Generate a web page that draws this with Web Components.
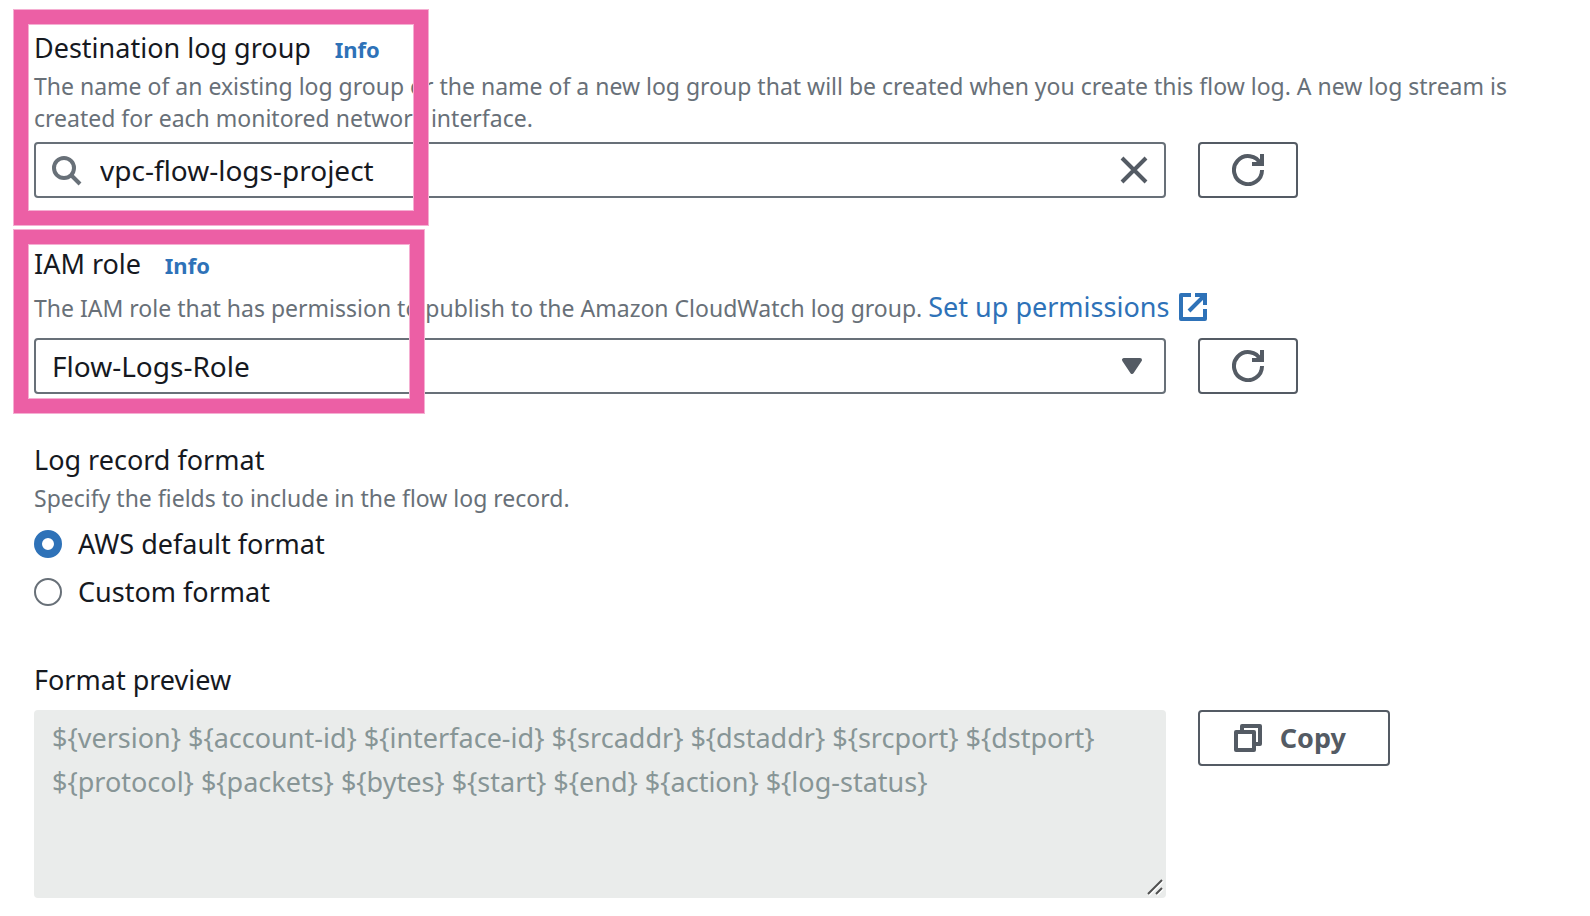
<!DOCTYPE html>
<html lang="en">
<head>
<meta charset="utf-8">
<title>Create flow log</title>
<style>
  html, body { margin: 0; background: #fff; }
  body {
    --ink: #16191f;
    --muted: #687078;
    --link: #2e72b8;
    --button: #545b64;
    --disabled-bg: #eaeceb;
    --disabled-ink: #879596;
    --marker: #ec5fa5;
    --marker-edge: #f5afd2;
    font-family: "Noto Sans", "Open Sans", sans-serif;
    font-size: 27px;
    line-height: 36px;
    color: var(--ink);
  }
</style>
</head>
<body>
<flow-log-form></flow-log-form>

<script>
const ICONS = {
  search: '<circle cx="7" cy="7" r="5"/><path d="m15 15-4.5-4.5"/>',
  close: '<path d="m2 2 12 12M14 2 2 14"/>',
  refresh: '<path d="M10 5h5V0M15 8a7 7 0 1 1-.7-3"/>',
  caret: '<path d="M4 5h8l-4 6z" fill="currentColor" stroke-linejoin="round"/>',
  external: '<path d="M9 2h5v5M6 10l8-8"/><path d="M14 9v5H2V2h5" stroke-linejoin="round"/>',
  copy: '<path d="M2 5h9v9H2z" stroke-linejoin="round"/><path d="M5 5V2h9v9h-3" stroke-linejoin="round"/>'
};

function define(name, html, setup) {
  const template = document.createElement('template');
  template.innerHTML = html;
  customElements.define(name, class extends HTMLElement {
    constructor() {
      super();
      this.attachShadow({ mode: 'open' }).append(template.content.cloneNode(true));
    }
    connectedCallback() {
      if (setup) setup(this, this.shadowRoot);
    }
  });
}

define('ui-icon', `
  <style>
    :host { display: inline-block; width: 32px; height: 32px; flex: none; }
    svg { display: block; width: 100%; height: 100%; fill: none; stroke: currentColor; stroke-width: 2; }
  </style>
  <svg viewBox="0 0 16 16" aria-hidden="true"></svg>`,
  (host, root) => { root.querySelector('svg').innerHTML = ICONS[host.getAttribute('name')]; });

define('ui-button', `
  <style>
    :host { display: inline-block; vertical-align: top; }
    button {
      display: flex; align-items: center; gap: 16px; box-sizing: border-box;
      height: 56px; padding: 0 32px; border: 2px solid var(--button); border-radius: 4px;
      background: #fff; color: var(--button); font: inherit; font-weight: 700; cursor: pointer;
    }
    :host([text]) button { padding-right: 42px; }
  </style>
  <button type="button"><slot></slot></button>`,
  (host, root) => {
    const button = root.querySelector('button');
    const icon = document.createElement('ui-icon');
    icon.setAttribute('name', host.getAttribute('icon'));
    button.prepend(icon);
    if (host.hasAttribute('label')) button.setAttribute('aria-label', host.getAttribute('label'));
  });

define('info-link', `
  <style>
    :host { display: inline; font-size: 22px; line-height: 1; }
    a { color: var(--link); font-weight: 700; text-decoration: none; margin-left: 18px; }
  </style>
  <a href="#info">Info</a>`);

define('external-link', `
  <style>
    :host { display: inline; font-size: 27px; line-height: 1; }
    a { color: var(--link); text-decoration: none; white-space: nowrap; }
    ui-icon { vertical-align: -6px; margin-left: 8px; }
  </style>
  <a href="#permissions"><slot></slot><ui-icon name="external"></ui-icon></a>`);

/* Search box with a leading icon and a clear button */
define('search-field', `
  <style>
    :host { display: block; }
    .box {
      display: flex; align-items: center; box-sizing: border-box; height: 56px; padding: 0 14px;
      border: 2px solid var(--muted); border-radius: 4px; color: var(--muted);
    }
    input {
      flex: 1; min-width: 0; margin: 0 18px; padding: 0; border: 0; outline: 0; background: none;
      font: inherit; font-size: 28px; color: var(--ink);
    }
    button { display: flex; padding: 0; border: 0; background: none; color: var(--button); cursor: pointer; }
  </style>
  <div class="box">
    <ui-icon name="search"></ui-icon>
    <input type="text" aria-label="Destination log group" value="vpc-flow-logs-project">
    <button type="button" aria-label="Clear"><ui-icon name="close"></ui-icon></button>
  </div>`,
  (host, root) => {
    const input = root.querySelector('input');
    root.querySelector('button').addEventListener('click', () => { input.value = ''; input.focus(); });
  });

define('role-select', `
  <style>
    :host { display: block; position: relative; }
    select {
      display: block; appearance: none; box-sizing: border-box; width: 100%; height: 56px; margin: 0;
      padding: 0 50px 0 16px; border: 2px solid var(--muted); border-radius: 4px;
      background: #fff; color: var(--ink); font: inherit; font-size: 28px;
    }
    ui-icon { position: absolute; right: 18px; top: 12px; color: var(--button); pointer-events: none; }
  </style>
  <select aria-label="IAM role"><option>Flow-Logs-Role</option></select>
  <ui-icon name="caret"></ui-icon>`);

define('format-choice', `
  <style>
    :host { display: grid; gap: 12px; }
    label { display: flex; align-items: center; gap: 16px; }
    input {
      appearance: none; box-sizing: border-box; width: 28px; height: 28px; margin: 0;
      border: 2px solid var(--muted); border-radius: 50%; background: #fff;
    }
    input:checked { border: 8px solid var(--link); }
  </style>
  <label><input type="radio" name="format" checked>AWS default format</label>
  <label><input type="radio" name="format">Custom format</label>`);

/* Read-only text area; the grip is drawn over its lower right corner */
define('format-preview', `
  <style>
    :host { display: block; position: relative; }
    textarea {
      display: block; box-sizing: border-box; width: 100%; height: 188px; margin: 0; padding: 6px 18px;
      border: 0; border-radius: 4px; resize: vertical; background: var(--disabled-bg);
      color: var(--disabled-ink); font: inherit; line-height: 44px;
    }
    textarea::-webkit-resizer { background: transparent; }
    svg { position: absolute; right: 0; bottom: 0; width: 20px; height: 20px; fill: none; stroke-width: 2; pointer-events: none; }
  </style>
  <textarea aria-label="Format preview" disabled>\${version} \${account-id} \${interface-id} \${srcaddr} \${dstaddr} \${srcport} \${dstport} \${protocol} \${packets} \${bytes} \${start} \${end} \${action} \${log-status}</textarea>
  <svg viewBox="0 0 20 20" aria-hidden="true">
    <path d="M3 17 17 3M11 17l6-6" stroke="#fff"/>
    <path d="M2 16 16 2M10 16l6-6" stroke="#505050"/>
  </svg>`);

/* Label and description above a control, with an optional action at its side */
define('form-field', `
  <style>
    :host { display: block; }
    .desc { margin-top: 4px; font-size: 23px; line-height: 32px; color: var(--muted); }
    :host([with-link]) .desc { line-height: 44px; }
    .row { display: grid; grid-template-columns: minmax(0, 3fr) minmax(0, 1fr); gap: 32px; margin-top: 8px; }
    :host([spaced]) .row { margin-top: 12px; }
    :host([plain]) .desc { display: none; }
  </style>
  <div class="label"><slot name="label"></slot></div>
  <div class="desc"><slot name="description"></slot></div>
  <div class="row"><slot></slot><div><slot name="action"></slot></div></div>`);

define('highlight-box', `
  <style>
    :host {
      display: block; position: absolute; box-sizing: border-box; pointer-events: none;
      border: 14px solid var(--marker);
      box-shadow: 0 0 0 1px var(--marker-edge), inset 0 0 0 1px var(--marker-edge);
    }
  </style>`);

define('flow-log-form', `
  <style>
    :host { display: block; position: relative; }
    form { display: grid; gap: 48px; padding: 30px 15px 18px 34px; }
    .preview { margin-top: 4px; }
    .first { left: 14px; top: 10px; width: 414px; height: 215px; }
    .second { left: 14px; top: 230px; width: 410px; height: 183px; }
  </style>
  <form>
    <form-field>
      <span slot="label">Destination log group<info-link></info-link></span>
      <span slot="description">The name of an existing log group or the name of a new log group that will be created when you create this flow log. A new log stream is created for each monitored network interface.</span>
      <search-field></search-field>
      <ui-button slot="action" icon="refresh" label="Refresh log groups"></ui-button>
    </form-field>
    <form-field with-link>
      <span slot="label">IAM role<info-link></info-link></span>
      <span slot="description">The IAM role that has permission to publish to the Amazon CloudWatch log group. <external-link>Set up permissions</external-link></span>
      <role-select></role-select>
      <ui-button slot="action" icon="refresh" label="Refresh roles"></ui-button>
    </form-field>
    <form-field spaced>
      <span slot="label">Log record format</span>
      <span slot="description">Specify the fields to include in the flow log record.</span>
      <format-choice></format-choice>
    </form-field>
    <form-field class="preview" plain spaced>
      <span slot="label">Format preview</span>
      <format-preview></format-preview>
      <ui-button slot="action" icon="copy" text>Copy</ui-button>
    </form-field>
  </form>
  <highlight-box class="first"></highlight-box>
  <highlight-box class="second"></highlight-box>`);
</script>
</body>
</html>
